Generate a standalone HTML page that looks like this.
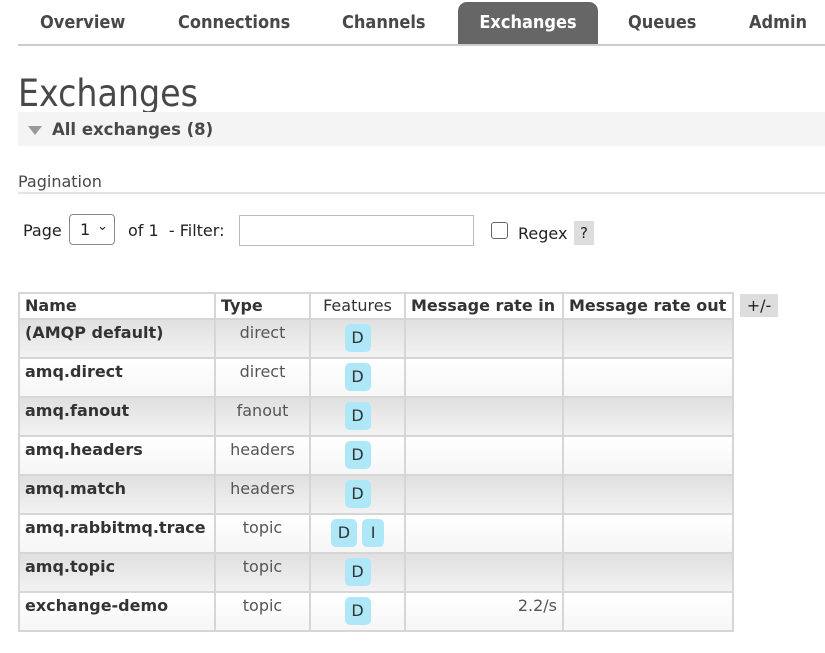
<!DOCTYPE html>
<html><head><style>
body{margin:0;background:#fff;font-family:"DejaVu Sans",Verdana,sans-serif;color:#333;width:825px;height:653px;overflow:hidden;position:relative}
.nav{position:absolute;left:18px;right:0;top:0;height:44px;border-bottom:2px solid #ccc}
.nav span{position:absolute;top:12px;font-family:"DejaVu Sans Condensed","DejaVu Sans",sans-serif;font-weight:bold;font-size:18px;color:#484848}
.nav .act{top:2px;height:42px;background:#666;color:#fff;border-radius:9px 9px 0 0;line-height:42px;text-align:center}
h1{position:absolute;left:18px;top:72px;margin:0;font-weight:normal;font-size:37px;color:#484848;font-family:"DejaVu Sans Condensed","DejaVu Sans",sans-serif}
.sec{position:absolute;left:18px;right:0;top:112px;height:34px;background:#f4f4f4}
.sec b{position:absolute;left:34px;top:8px;font-size:16.5px;color:#484848}
.tri{position:absolute;left:10px;top:14px;border-left:7px solid transparent;border-right:7px solid transparent;border-top:9px solid #999}
.pg{position:absolute;left:18px;top:172px;font-size:16px;color:#484848}
.pl{position:absolute;left:18px;right:0;top:192px;border-top:2px solid #e4e4e4}
.t{position:absolute;font-size:16px;color:#222;white-space:nowrap}
table{position:absolute;left:18px;top:292px;border-collapse:collapse;font-size:16px;table-layout:fixed;width:714px}
td,th{border:2px solid #d6d6d6;padding:0 5px;vertical-align:top;white-space:nowrap;overflow:hidden}
th{height:23px;text-align:left;font-size:16px;line-height:24px}
td{height:37px;line-height:26px}
tr.o td{background:linear-gradient(#e0e0e0,#f2f2f2)}
tr.e td{background:linear-gradient(#fff,#f6f6f6)}
td.n{font-weight:bold}
td.ty{text-align:center;color:#555}
td.f{text-align:center;padding:0}
.d{display:inline-block;width:26px;height:28px;line-height:28px;background:#aee8f8;border-radius:5px;color:#333;margin-top:4px;text-align:center}
</style></head><body>
<div class="nav">
<span style="left:22px">Overview</span>
<span style="left:160px">Connections</span>
<span style="left:324px">Channels</span>
<span class="act" style="left:440px;width:140px">Exchanges</span>
<span style="left:610px">Queues</span>
<span style="left:731px">Admin</span>
</div>
<h1>Exchanges</h1>
<div class="sec"><div class="tri"></div><b>All exchanges (8)</b></div>
<div class="pg">Pagination</div>
<div class="pl"></div>
<div class="t" style="left:23px;top:221px">Page</div>
<div style="position:absolute;left:69px;top:214px;width:46px;height:31px;border:1px solid #888;border-radius:4px;box-sizing:border-box"><span class="t" style="left:10px;top:5px">1</span><span class="t" style="left:27px;top:4px;font-size:13px">&#8964;</span></div>
<div class="t" style="left:128px;top:221px">of 1 &nbsp;- Filter:</div>
<div style="position:absolute;left:239px;top:215px;width:235px;height:31px;border:1px solid #bbb;box-sizing:border-box"></div>
<div style="position:absolute;left:491px;top:222px;width:17px;height:17px;border:1px solid #666;border-radius:3px;box-sizing:border-box"></div>
<div class="t" style="left:518px;top:224px">Regex</div>
<div class="t" style="left:574px;top:221px;width:20px;height:24px;background:#ddd;text-align:center;line-height:24px;font-size:15px">?</div>
<table>
<colgroup><col style="width:196px"><col style="width:95px"><col style="width:95px"><col style="width:158px"><col style="width:170px"></colgroup>
<tr><th>Name</th><th>Type</th><th style="font-weight:normal;text-align:center">Features</th><th>Message rate in</th><th>Message rate out</th></tr>
<tr class="o"><td class="n">(AMQP default)</td><td class="ty">direct</td><td class="f"><span class="d">D</span></td><td></td><td></td></tr>
<tr class="e"><td class="n">amq.direct</td><td class="ty">direct</td><td class="f"><span class="d">D</span></td><td></td><td></td></tr>
<tr class="o"><td class="n">amq.fanout</td><td class="ty">fanout</td><td class="f"><span class="d">D</span></td><td></td><td></td></tr>
<tr class="e"><td class="n">amq.headers</td><td class="ty">headers</td><td class="f"><span class="d">D</span></td><td></td><td></td></tr>
<tr class="o"><td class="n">amq.match</td><td class="ty">headers</td><td class="f"><span class="d">D</span></td><td></td><td></td></tr>
<tr class="e"><td class="n">amq.rabbitmq.trace</td><td class="ty">topic</td><td class="f"><span class="d">D</span> <span class="d" style="width:22px">I</span></td><td></td><td></td></tr>
<tr class="o"><td class="n">amq.topic</td><td class="ty">topic</td><td class="f"><span class="d">D</span></td><td></td><td></td></tr>
<tr class="e"><td class="n">exchange-demo</td><td class="ty">topic</td><td class="f"><span class="d">D</span></td><td style="text-align:right;color:#555">2.2/s</td><td></td></tr>
</table>
<div class="t" style="left:740px;top:294px;width:38px;height:23px;background:#ddd;text-align:center;line-height:23px">+/-</div>
</body></html>
